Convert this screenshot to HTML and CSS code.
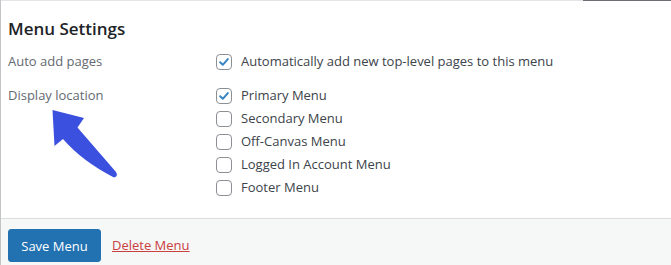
FILE: index.html
```html
<!DOCTYPE html>
<html lang="en">
<head>
<meta charset="utf-8">
<title>Menu Settings</title>
<link rel="stylesheet" href="styles.css">
</head>
<body>
<div class="page">
  <div class="topline"></div>
  <section class="settings">
    <h3 class="title">Menu Settings</h3>
    <div class="row row-auto">
      <div class="label">Auto add pages</div>
      <div class="opts">
        <label class="opt"><span class="box"><svg viewBox="0 0 16 16" class="tick"><path d="M3.6 8.3 L6.6 11.2 L12.4 4.6"/></svg></span>Automatically add new top-level pages to this menu</label>
      </div>
    </div>
    <div class="row row-loc">
      <div class="label">Display location</div>
      <div class="opts">
        <label class="opt"><span class="box"><svg viewBox="0 0 16 16" class="tick"><path d="M3.6 8.3 L6.6 11.2 L12.4 4.6"/></svg></span>Primary Menu</label>
        <label class="opt"><span class="box"></span>Secondary Menu</label>
        <label class="opt"><span class="box"></span>Off-Canvas Menu</label>
        <label class="opt"><span class="box"></span>Logged In Account Menu</label>
        <label class="opt"><span class="box"></span>Footer Menu</label>
      </div>
    </div>
    <svg class="arrow" viewBox="49 107 72 73" width="72" height="73">
      <path d="M52.5 110 L84 118 L77.5 127.5 L116 172 Q118.5 176.5 114 177.5 Q82 161 63 139 L54.5 146 Z"/>
    </svg>
  </section>
  <footer class="actions">
    <button class="btn-save" type="button">Save Menu</button>
    <a class="delete" href="#">Delete Menu</a>
  </footer>
</div>
</body>
</html>
```
FILE: styles.css
```css
* { box-sizing: border-box; }
html, body { margin: 0; padding: 0; background: #fff; }
body {
  font-family: "Open Sans", "Noto Sans", "Liberation Sans", sans-serif;
  width: 671px;
  height: 265px;
  overflow: hidden;
}
.page {
  border-left: 1px solid #c3c4c7;
  height: 265px;
  display: flex;
  flex-direction: column;
}
.topline {
  height: 1px;
  background: linear-gradient(to right, #e2e4e7 0, #e2e4e7 582px, #6b6e72 582px);
}
.settings {
  position: relative;
  height: 217px;
  padding: 16px 0 0 7px;
}
.title {
  margin: 0;
  font-size: 17px;
  line-height: 23px;
  font-weight: 600;
  color: #1d2327;
}
.row {
  display: grid;
  grid-template-columns: 208px 1fr;
  font-size: 13px;
  line-height: 23px;
}
.row-auto { margin-top: 10px; }
.row-loc { margin-top: 11px; }
.label { color: #646970; }
.opts { display: flex; flex-direction: column; }
.opt {
  display: flex;
  align-items: center;
  color: #3c434a;
  height: 23px;
}
.box {
  width: 16px;
  height: 16px;
  border: 1px solid #8c8f94;
  border-radius: 4px;
  background: #fff;
  margin-right: 9px;
  display: flex;
  align-items: center;
  justify-content: center;
  flex: none;
}
.tick { width: 14px; height: 14px; }
.tick path {
  fill: none;
  stroke: #3582c4;
  stroke-width: 2.2;
  stroke-linecap: round;
  stroke-linejoin: round;
}
.arrow {
  position: absolute;
  left: 48px;
  top: 106px;
}
.arrow path { fill: #3b50df; }
.actions {
  flex: 1;
  border-top: 1px solid #dcdcde;
  background: #f6f7f7;
  display: flex;
  align-items: flex-start;
  padding: 10px 0 0 7px;
}
.btn-save {
  height: 33px;
  width: 93px;
  background: #2271b1;
  border: 1px solid #2271b1;
  border-radius: 3px;
  color: #fff;
  font-family: inherit;
  font-size: 13px;
  padding: 0;
  cursor: pointer;
}
.delete {
  margin-left: 11px;
  line-height: 33px;
  font-size: 13px;
  color: #c9403f;
  text-decoration: underline;
}
```
